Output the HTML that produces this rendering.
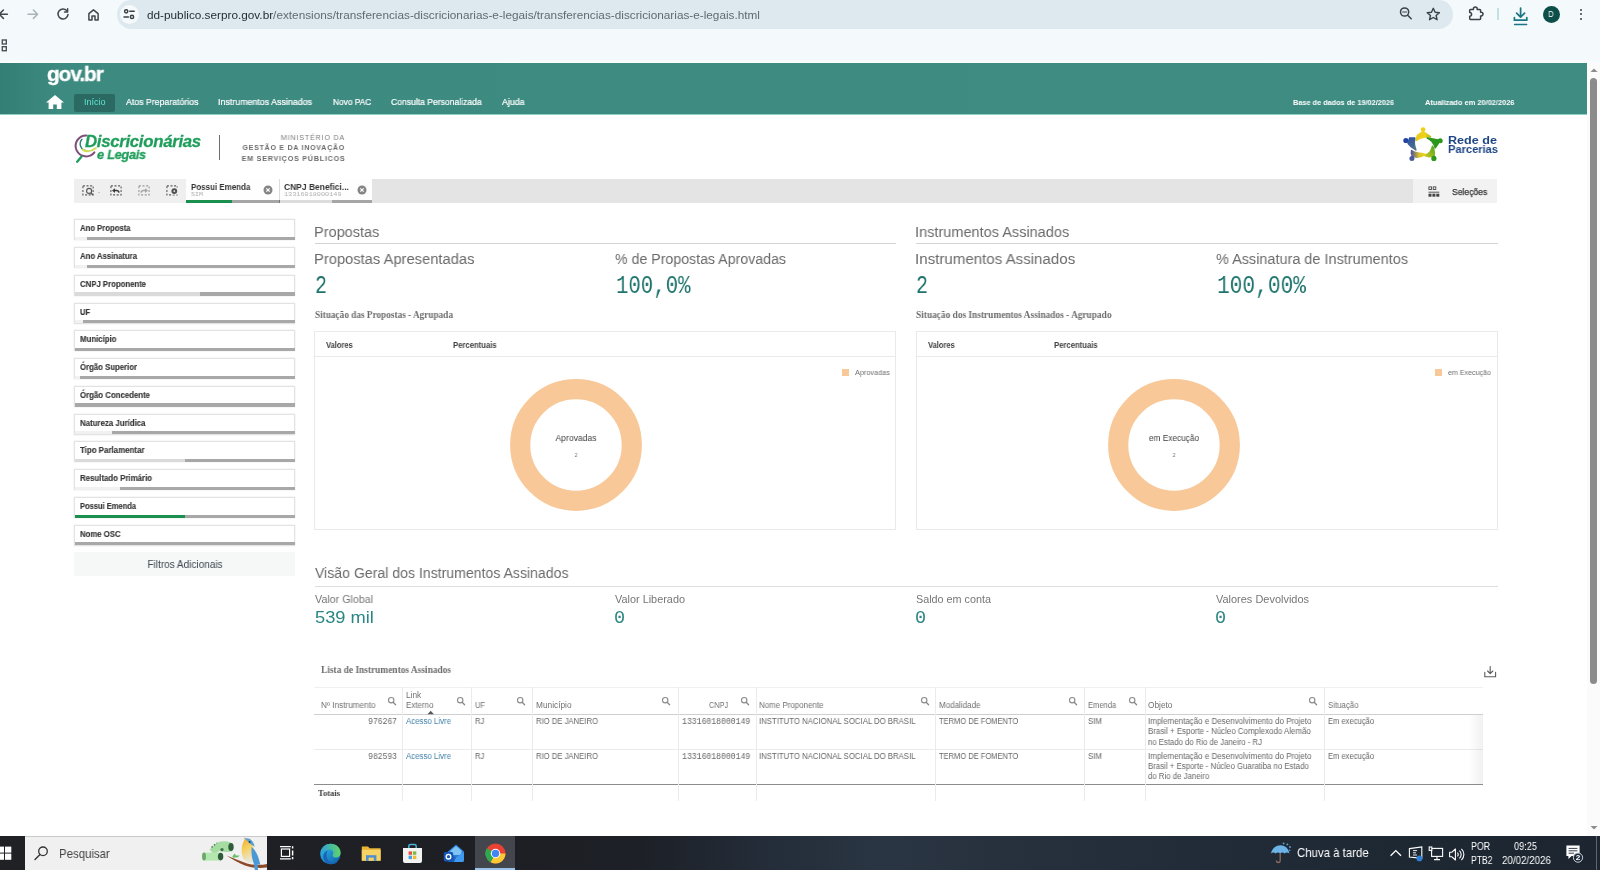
<!DOCTYPE html><html><head><meta charset="utf-8"><title>dd-publico</title><style>
html,body{margin:0;padding:0}body{width:1600px;height:870px;position:relative;overflow:hidden;background:#fff;font-family:"Liberation Sans",sans-serif}
.t{position:absolute;white-space:pre;line-height:1;display:inline-block;will-change:transform}
</style></head><body>
<div style="position:absolute;left:0px;top:0px;width:1600px;height:63px;background:#f4f9fc;"></div>
<div style="position:absolute;left:116.5px;top:0px;width:1336.5px;height:28.5px;background:#dde9ef;border-radius:14.25px;"></div>
<div style="position:absolute;left:119.5px;top:4.7px;width:19px;height:19px;background:#f6fafc;border-radius:50%;"></div>
<svg style="position:absolute;left:122px;top:7px;" width="14" height="14" viewBox="0 0 14 14"><g fill="none" stroke="#3a4247" stroke-width="1.5" stroke-linecap="round"><circle cx="4.2" cy="4.3" r="1.6"/><path d="M7.8 4.3H12.2"/><circle cx="10" cy="9.9" r="1.6"/><path d="M2 9.9H6.4"/></g></svg>
<svg style="position:absolute;left:0px;top:6px;" width="110" height="18" viewBox="0 0 110 18"><g fill="none" stroke="#40474c" stroke-width="1.5" stroke-linecap="round" stroke-linejoin="round"><path d="M7.4 8.2H-0.5M3.4 4L-0.8 8.2L3.4 12.4"/></g><g fill="none" stroke="#a9b4ba" stroke-width="1.5" stroke-linecap="round" stroke-linejoin="round"><path d="M28 8.2H37.3M33.4 4L37.6 8.2L33.4 12.4"/></g><g fill="none" stroke="#40474c" stroke-width="1.5" stroke-linecap="round" stroke-linejoin="round"><path d="M67.2 5.2A5 5 0 1 0 68 8.6"/><path d="M67.6 2.8V5.9H64.5" /></g><g fill="none" stroke="#40474c" stroke-width="1.5" stroke-linejoin="round"><path d="M88.9 14V7.6L93.5 3.8L98.1 7.6V14H95V10H92V14Z"/></g></svg>
<span class="t" style='top:10.00px;font-family:"Liberation Sans", sans-serif;font-size:11.4px;font-weight:400;color:#1f2a30;left:146.6px;transform-origin:0 0;transform:scaleX(1.0337);'>dd-publico.serpro.gov.br<span style="color:#5f6b72">/extensions/transferencias-discricionarias-e-legais/transferencias-discricionarias-e-legais.html</span></span>
<svg style="position:absolute;left:1396px;top:4px;" width="60" height="20" viewBox="0 0 60 20"><g fill="none" stroke="#3a4247" stroke-width="1.5" stroke-linecap="round" stroke-linejoin="round"><circle cx="8.6" cy="8" r="4.1"/><path d="M11.7 11.2L15.2 14.8"/><path d="M6.7 8H10.5" stroke-width="1.2"/><path d="M37.3 4.3L39.1 8.3L43.4 8.7L40.1 11.5L41.1 15.7L37.3 13.5L33.5 15.7L34.5 11.5L31.2 8.7L35.5 8.3Z" stroke-width="1.4"/></g></svg>
<svg style="position:absolute;left:1467px;top:5px;" width="18" height="18" viewBox="0 0 18 18"><path d="M2.7 5.3Q2.7 4.5 3.5 4.5H6.4V3.9A1.9 1.9 0 0 1 10.2 3.9V4.5H12.8Q13.6 4.5 13.6 5.3V7.3H14.2A1.8 1.8 0 0 1 14.2 10.9H13.6V13.6Q13.6 14.4 12.8 14.4H3.5Q2.7 14.4 2.7 13.6V11.3A1.9 1.9 0 0 0 2.7 7.5Z" fill="none" stroke="#3a4247" stroke-width="1.5" stroke-linejoin="round"/></svg>
<div style="position:absolute;left:1497.2px;top:8.2px;width:1.6px;height:12.2px;background:#c2e1e6;"></div>
<svg style="position:absolute;left:1511px;top:5px;" width="20" height="22" viewBox="0 0 20 22"><g fill="none" stroke="#1a7682" stroke-width="1.7" stroke-linecap="round" stroke-linejoin="round"><path d="M9.6 3V12M5.6 8.2L9.6 12.2L13.6 8.2"/><path d="M3.4 12.5V15.2H15.8V12.5"/><path d="M3.6 19.5H15.6" stroke-width="1.5"/></g></svg>
<div style="position:absolute;left:1542.7px;top:5.7px;width:17px;height:17px;background:#0b4f48;border-radius:50%;"></div>
<span class="t" style='top:9.00px;font-family:"Liberation Sans", sans-serif;font-size:9.4px;font-weight:400;color:#fff;left:1551.3px;transform-origin:0 0;margin-left:-500px;width:1000px;text-align:center;transform-origin:50% 0;transform:scaleX(0.7963);'>D</span>
<div style="position:absolute;left:1580.3px;top:8.8px;width:2px;height:2px;background:#3a4247;border-radius:50%;"></div>
<div style="position:absolute;left:1580.3px;top:13.3px;width:2px;height:2px;background:#3a4247;border-radius:50%;"></div>
<div style="position:absolute;left:1580.3px;top:17.8px;width:2px;height:2px;background:#3a4247;border-radius:50%;"></div>
<svg style="position:absolute;left:0px;top:38px;" width="10" height="16" viewBox="0 0 10 16"><g fill="none" stroke="#4a5256" stroke-width="1.4"><rect x="2.3" y="2" width="4" height="4"/><rect x="2.3" y="8.7" width="4" height="4"/></g></svg>
<div style="position:absolute;left:0px;top:59.5px;width:1600px;height:3.5px;background:linear-gradient(180deg,#f4f9fc,#fafdfe);"></div>
<div style="position:absolute;left:0px;top:63px;width:1587px;height:51px;background:linear-gradient(90deg,#347f75 0px,#3d8a80 60px,#3f8c82 100%);"></div>
<div style="position:absolute;left:0px;top:113.5px;width:1587px;height:1.5px;background:#8fd0c6;"></div>
<div style="position:absolute;left:1587px;top:63px;width:13px;height:773px;background:#fbfbfb;"></div>
<div style="position:absolute;left:1590.4px;top:78.3px;width:7px;height:605.7px;background:#8b8b8b;border-radius:3.5px;"></div>
<svg style="position:absolute;left:1588px;top:66px;" width="12" height="8" viewBox="0 0 12 8"><path d="M2.5 6L6 2.5L9.5 6Z" fill="#8b8b8b"/></svg>
<svg style="position:absolute;left:1588px;top:824px;" width="12" height="8" viewBox="0 0 12 8"><path d="M2.5 2L6 5.5L9.5 2Z" fill="#8b8b8b"/></svg>
<span class="t" style='top:63.00px;font-family:"Liberation Sans", sans-serif;font-size:21px;font-weight:700;color:#fff;left:47px;transform-origin:0 0;transform:scaleX(0.9854);letter-spacing:-1px;-webkit-text-stroke:0.35px #fff;'>gov.br</span>
<svg style="position:absolute;left:45px;top:94px;" width="20" height="16" viewBox="0 0 20 16"><path d="M10 1L1 8.6H3.6V15H8.2V10.4H11.8V15H16.4V8.6H19Z" fill="#fff"/></svg>
<div style="position:absolute;left:74.3px;top:93.8px;width:40.7px;height:18px;background:#2b6a63;border-radius:2px;"></div>
<span class="t" style='top:98.00px;font-family:"Liberation Sans", sans-serif;font-size:9px;font-weight:400;color:#5fe3d3;left:83.8px;transform-origin:0 0;transform:scaleX(0.9853);'>Início</span>
<span class="t" style='top:98.00px;font-family:"Liberation Sans", sans-serif;font-size:9px;font-weight:400;color:#fff;left:125.5px;transform-origin:0 0;transform:scaleX(0.9725);-webkit-text-stroke:0.2px #fff;'>Atos Preparatórios</span>
<span class="t" style='top:98.00px;font-family:"Liberation Sans", sans-serif;font-size:9px;font-weight:400;color:#fff;left:218px;transform-origin:0 0;transform:scaleX(0.9836);-webkit-text-stroke:0.2px #fff;'>Instrumentos Assinados</span>
<span class="t" style='top:98.00px;font-family:"Liberation Sans", sans-serif;font-size:9px;font-weight:400;color:#fff;left:332.5px;transform-origin:0 0;transform:scaleX(0.9260);-webkit-text-stroke:0.2px #fff;'>Novo PAC</span>
<span class="t" style='top:98.00px;font-family:"Liberation Sans", sans-serif;font-size:9px;font-weight:400;color:#fff;left:390.8px;transform-origin:0 0;transform:scaleX(0.9541);-webkit-text-stroke:0.2px #fff;'>Consulta Personalizada</span>
<span class="t" style='top:98.00px;font-family:"Liberation Sans", sans-serif;font-size:9px;font-weight:400;color:#fff;left:501.5px;transform-origin:0 0;transform:scaleX(0.9769);-webkit-text-stroke:0.2px #fff;'>Ajuda</span>
<span class="t" style='top:99.00px;font-family:"Liberation Sans", sans-serif;font-size:7.6px;font-weight:700;color:#fff;left:1293.3px;transform-origin:0 0;transform:scaleX(0.9648);'>Base de dados de 19/02/2026</span>
<span class="t" style='top:99.00px;font-family:"Liberation Sans", sans-serif;font-size:7.6px;font-weight:700;color:#fff;left:1425px;transform-origin:0 0;transform:scaleX(0.9771);'>Atualizado em 20/02/2026</span>
<svg style="position:absolute;left:70px;top:128px;" width="40" height="40" viewBox="0 0 40 40"><g fill="none" stroke-linecap="round"><path d="M16.4 7.4A10.5 10.5 0 1 0 24.4 24.4" stroke="#7d4f7c" stroke-width="2"/><path d="M12 11.2A6.8 6.8 0 0 0 16.8 22.6" stroke="#1f7d6c" stroke-width="1.3"/><path d="M12.4 21.6Q18.6 25.6 26 20" stroke="#d3dc58" stroke-width="1.9"/><path d="M11.6 28.6L7.2 33.8" stroke="#1e9e5a" stroke-width="2.3"/></g></svg>
<span class="t" style='top:134.00px;font-family:"Liberation Sans", sans-serif;font-size:16.8px;font-weight:700;color:#1e9e5a;font-style:italic;left:84.5px;transform-origin:0 0;letter-spacing:-0.3px;-webkit-text-stroke:0.3px #1e9e5a;'>Discricionárias</span>
<span class="t" style='top:148.00px;font-family:"Liberation Sans", sans-serif;font-size:13.2px;font-weight:700;color:#1e9e5a;font-style:italic;left:97.2px;transform-origin:0 0;transform:scaleX(0.9684);letter-spacing:-0.3px;-webkit-text-stroke:0.3px #1e9e5a;'>e Legais</span>
<div style="position:absolute;left:218.8px;top:135px;width:1.1px;height:24.5px;background:#6f6f6f;"></div>
<span class="t" style='top:134.00px;font-family:"Liberation Sans", sans-serif;font-size:7.4px;font-weight:400;color:#7a7a7a;right:1255px;transform-origin:100% 0;transform:scaleX(0.9577);letter-spacing:0.9px;'>MINISTÉRIO DA</span>
<span class="t" style='top:144.00px;font-family:"Liberation Sans", sans-serif;font-size:7.4px;font-weight:700;color:#6a6a6a;right:1255px;transform-origin:100% 0;transform:scaleX(0.9492);letter-spacing:0.8px;'>GESTÃO E DA INOVAÇÃO</span>
<span class="t" style='top:155.00px;font-family:"Liberation Sans", sans-serif;font-size:7.4px;font-weight:700;color:#6a6a6a;right:1255px;transform-origin:100% 0;transform:scaleX(0.9660);letter-spacing:0.8px;'>EM SERVIÇOS PÚBLICOS</span>
<svg style="position:absolute;left:1395px;top:122px;" width="60" height="44" viewBox="0 0 60 44"><defs>
<linearGradient id="r1" x1="0" y1="0" x2="1" y2="0"><stop offset="0" stop-color="#e8c818"/><stop offset="0.6" stop-color="#f0d21a"/><stop offset="1" stop-color="#b4b61e"/></linearGradient>
<linearGradient id="r3" x1="1" y1="0" x2="0" y2="1"><stop offset="0" stop-color="#4fa41e"/><stop offset="1" stop-color="#cfca1e"/></linearGradient>
<linearGradient id="r4" x1="0" y1="0" x2="1" y2="0"><stop offset="0" stop-color="#55559a"/><stop offset="0.55" stop-color="#d8c428"/><stop offset="1" stop-color="#ecd41c"/></linearGradient>
<linearGradient id="r5" x1="0" y1="0" x2="0.6" y2="1"><stop offset="0" stop-color="#2c50aa"/><stop offset="1" stop-color="#4f6f86"/></linearGradient></defs>
<path d="M28.1 9.6L35.6 14.9C33 14.6 30 14.9 27.5 15.6C25 16.3 22.8 17.2 21 18.6L22.4 13.4Z" fill="url(#r1)" stroke="url(#r1)" stroke-width="1.5" stroke-linejoin="round"/>
<path d="M32.2 16L44.6 18.2L43.2 21.6L40.2 25.9C39.6 23.4 38.4 21 36.8 19.2C35.4 17.8 34 16.8 32.2 16Z" fill="#2b981c" stroke="#2b981c" stroke-width="1.5" stroke-linejoin="round"/>
<path d="M37.5 24.2C38.8 26 39.4 29 39.2 33.9L34.2 34.8L29.6 33.6C32 32.8 34 31.4 35.4 29.4C36.4 27.8 37.2 26 37.5 24.2Z" fill="url(#r3)" stroke="url(#r3)" stroke-width="1.5" stroke-linejoin="round"/>
<path d="M16.6 28.6C18.4 29.8 20.4 30.6 23 31C25.6 31.4 28 31.6 30.4 32.4L27 34.2L22 35.2L17.4 34.2L16.4 31.2Z" fill="url(#r4)" stroke="url(#r4)" stroke-width="1.5" stroke-linejoin="round"/>
<path d="M14.6 16.1L19.8 16.1C19.2 18 19.1 20.2 19.4 22.4C19.7 24.4 20.2 26.2 20.9 27.9L16 24.6L13.1 21.6Z" fill="url(#r5)" stroke="url(#r5)" stroke-width="1.5" stroke-linejoin="round"/>
<circle cx="28.1" cy="7.6" r="2.3" fill="#f0cf14"/><circle cx="45.2" cy="18.7" r="2.5" fill="#2b981c"/><circle cx="38.9" cy="36.4" r="2.6" fill="#2e951e"/><circle cx="16.9" cy="36.4" r="2.5" fill="#4a5a9c"/><circle cx="10.9" cy="18.5" r="2.6" fill="#2342a4"/></svg>
<span class="t" style='top:134.00px;font-family:"Liberation Sans", sans-serif;font-size:11.6px;font-weight:700;color:#1d4584;left:1448px;transform-origin:0 0;transform:scaleX(1.0862);'>Rede de</span>
<span class="t" style='top:143.00px;font-family:"Liberation Sans", sans-serif;font-size:11.6px;font-weight:700;color:#1d4584;left:1448px;transform-origin:0 0;transform:scaleX(0.9575);'>Parcerias</span>
<div style="position:absolute;left:74.3px;top:179.3px;width:1423px;height:24px;background:#e4e4e4;"></div>
<div style="position:absolute;left:74.3px;top:179.3px;width:111.4px;height:24px;background:#efefef;"></div>
<svg style="position:absolute;left:82.2px;top:185.4px;" width="20" height="12" viewBox="0 0 20 12"><rect x="0.9" y="0.9" width="10.2" height="9" fill="none" stroke="#5c5c5c" stroke-width="1.1" stroke-dasharray="2 1.6"/><circle cx="7.1" cy="5.9" r="2.5" fill="#efefef" stroke="#555" stroke-width="1.1"/><path d="M8.9 7.8L10.9 10" stroke="#555" stroke-width="1.4"/><path d="M16.2 7.6H18" stroke="#bbb" stroke-width="0.9"/></svg>
<svg style="position:absolute;left:110px;top:185.4px;" width="20" height="12" viewBox="0 0 20 12"><rect x="0.9" y="0.9" width="10.2" height="9" fill="none" stroke="#5c5c5c" stroke-width="1.1" stroke-dasharray="2 1.6"/><path d="M3.6 5.6H6.4C8 5.6 8.8 6.4 9 7.6" fill="none" stroke="#3a3a3a" stroke-width="1.5"/><path d="M5 3.2L2 5.6L5 8Z" fill="#3a3a3a"/></svg>
<svg style="position:absolute;left:138px;top:185.4px;" width="20" height="12" viewBox="0 0 20 12"><rect x="0.9" y="0.9" width="10.2" height="9" fill="none" stroke="#9a9a9a" stroke-width="1.1" stroke-dasharray="2 1.6"/><path d="M8.4 5.6H5.6C4 5.6 3.2 6.4 3 7.6" fill="none" stroke="#a5a5a5" stroke-width="1.5"/><path d="M7 3.2L10 5.6L7 8Z" fill="#a5a5a5"/></svg>
<svg style="position:absolute;left:165.8px;top:185.4px;" width="20" height="12" viewBox="0 0 20 12"><rect x="0.9" y="0.9" width="10.2" height="9" fill="none" stroke="#5c5c5c" stroke-width="1.1" stroke-dasharray="2 1.6"/><rect x="5" y="2.6" width="7" height="7" fill="#efefef"/><circle cx="8.3" cy="6.1" r="2.9" fill="#505050"/><circle cx="8.3" cy="6.1" r="0.9" fill="#efefef"/></svg>
<div style="position:absolute;left:185.6px;top:179px;width:93.2px;height:24.2px;background:#fefefe;"></div>
<span class="t" style='top:183.00px;font-family:"Liberation Sans", sans-serif;font-size:8.9px;font-weight:700;color:#333;left:191px;transform-origin:0 0;transform:scaleX(0.8972);'>Possui Emenda</span>
<span class="t" style='top:192.00px;font-family:"Liberation Mono", monospace;font-size:6.2px;font-weight:400;color:#b0b0b0;left:191px;transform-origin:0 0;transform:scaleX(1.0771);'>SIM</span>
<div style="position:absolute;left:185.8px;top:200.4px;width:93.5px;height:2.9px;background:#a6a6a6;"></div>
<div style="position:absolute;left:185.8px;top:200.4px;width:46.2px;height:2.9px;background:#1b8f4d;"></div>
<div style="position:absolute;left:278.8px;top:179.3px;width:1.2px;height:24px;background:#dcdcdc;"></div>
<div style="position:absolute;left:279.2px;top:200.4px;width:0.9px;height:2.9px;background:#777;"></div>
<div style="position:absolute;left:280px;top:179px;width:91.9px;height:24.2px;background:#fefefe;"></div>
<span class="t" style='top:183.00px;font-family:"Liberation Sans", sans-serif;font-size:8.9px;font-weight:700;color:#333;left:284.4px;transform-origin:0 0;transform:scaleX(0.9521);'>CNPJ Benefici...</span>
<span class="t" style='top:192.00px;font-family:"Liberation Mono", monospace;font-size:6.2px;font-weight:400;color:#b0b0b0;left:284.4px;transform-origin:0 0;transform:scaleX(1.1061);'>13316018000149</span>
<div style="position:absolute;left:280.1px;top:200.4px;width:91.7px;height:2.9px;background:#a6a6a6;"></div>
<div style="position:absolute;left:280.1px;top:200.4px;width:52.4px;height:2.9px;background:#dcdcdc;"></div>
<svg style="position:absolute;left:263.2px;top:184.6px;" width="10" height="10" viewBox="0 0 10 10"><circle cx="5" cy="5" r="4.5" fill="#858585"/><path d="M3.3 3.3L6.7 6.7M6.7 3.3L3.3 6.7" stroke="#fff" stroke-width="1.2"/></svg>
<svg style="position:absolute;left:356.8px;top:184.6px;" width="10" height="10" viewBox="0 0 10 10"><circle cx="5" cy="5" r="4.5" fill="#858585"/><path d="M3.3 3.3L6.7 6.7M6.7 3.3L3.3 6.7" stroke="#fff" stroke-width="1.2"/></svg>
<div style="position:absolute;left:1413.4px;top:179.3px;width:84px;height:24px;background:#f2f2f2;"></div>
<svg style="position:absolute;left:1427.5px;top:186px;" width="12" height="12" viewBox="0 0 12 12"><g fill="none" stroke="#444" stroke-width="0.9"><rect x="0.9" y="0.9" width="2.6" height="2.6"/><rect x="5.2" y="0.9" width="2.6" height="2.6"/></g><path d="M0.5 6.2H11.3" stroke="#444" stroke-width="0.9"/><g fill="#444"><rect x="0.5" y="7.7" width="3" height="3"/><rect x="4.4" y="7.7" width="3" height="3"/><rect x="8.3" y="7.7" width="3" height="3"/></g></svg>
<span class="t" style='top:188.00px;font-family:"Liberation Sans", sans-serif;font-size:9.2px;font-weight:400;color:#333;left:1452.3px;transform-origin:0 0;transform:scaleX(0.9313);-webkit-text-stroke:0.25px #333;'>Seleções</span>
<div style="position:absolute;left:74.3px;top:219.4px;width:221px;height:21px;background:#fff;box-sizing:border-box;border:1px solid #e3e3e3;box-shadow:0 0 1.5px rgba(0,0,0,0.12);"></div>
<div style="position:absolute;left:74.8px;top:236.9px;width:220px;height:3.1px;background:#a8a8a8;"></div>
<div style="position:absolute;left:74.8px;top:236.9px;width:12px;height:3.1px;background:#f1f1f1;"></div>
<span class="t" style='top:224.00px;font-family:"Liberation Sans", sans-serif;font-size:8.6px;font-weight:700;color:#383838;left:79.8px;transform-origin:0 0;transform:scaleX(0.8963);-webkit-text-stroke:0.15px #383838;'>Ano Proposta</span>
<div style="position:absolute;left:74.3px;top:247.16px;width:221px;height:21px;background:#fff;box-sizing:border-box;border:1px solid #e3e3e3;box-shadow:0 0 1.5px rgba(0,0,0,0.12);"></div>
<div style="position:absolute;left:74.8px;top:264.65999999999997px;width:220px;height:3.1px;background:#a8a8a8;"></div>
<div style="position:absolute;left:74.8px;top:264.65999999999997px;width:12px;height:3.1px;background:#f1f1f1;"></div>
<span class="t" style='top:252.00px;font-family:"Liberation Sans", sans-serif;font-size:8.6px;font-weight:700;color:#383838;left:79.8px;transform-origin:0 0;transform:scaleX(0.9019);-webkit-text-stroke:0.15px #383838;'>Ano Assinatura</span>
<div style="position:absolute;left:74.3px;top:274.92px;width:221px;height:21px;background:#fff;box-sizing:border-box;border:1px solid #e3e3e3;box-shadow:0 0 1.5px rgba(0,0,0,0.12);"></div>
<div style="position:absolute;left:74.8px;top:292.42px;width:220px;height:3.1px;background:#a8a8a8;"></div>
<div style="position:absolute;left:74.8px;top:292.42px;width:125.5px;height:3.1px;background:#dadada;"></div>
<span class="t" style='top:280.00px;font-family:"Liberation Sans", sans-serif;font-size:8.6px;font-weight:700;color:#383838;left:79.8px;transform-origin:0 0;transform:scaleX(0.9033);-webkit-text-stroke:0.15px #383838;'>CNPJ Proponente</span>
<div style="position:absolute;left:74.3px;top:302.68px;width:221px;height:21px;background:#fff;box-sizing:border-box;border:1px solid #e3e3e3;box-shadow:0 0 1.5px rgba(0,0,0,0.12);"></div>
<div style="position:absolute;left:74.8px;top:320.18px;width:220px;height:3.1px;background:#a8a8a8;"></div>
<div style="position:absolute;left:74.8px;top:320.18px;width:8px;height:3.1px;background:#f1f1f1;"></div>
<span class="t" style='top:308.00px;font-family:"Liberation Sans", sans-serif;font-size:8.6px;font-weight:700;color:#383838;left:79.8px;transform-origin:0 0;transform:scaleX(0.8719);-webkit-text-stroke:0.15px #383838;'>UF</span>
<div style="position:absolute;left:74.3px;top:330.44px;width:221px;height:21px;background:#fff;box-sizing:border-box;border:1px solid #e3e3e3;box-shadow:0 0 1.5px rgba(0,0,0,0.12);"></div>
<div style="position:absolute;left:74.8px;top:347.94px;width:220px;height:3.1px;background:#a8a8a8;"></div>
<span class="t" style='top:335.00px;font-family:"Liberation Sans", sans-serif;font-size:8.6px;font-weight:700;color:#383838;left:79.8px;transform-origin:0 0;transform:scaleX(0.9100);-webkit-text-stroke:0.15px #383838;'>Município</span>
<div style="position:absolute;left:74.3px;top:358.20000000000005px;width:221px;height:21px;background:#fff;box-sizing:border-box;border:1px solid #e3e3e3;box-shadow:0 0 1.5px rgba(0,0,0,0.12);"></div>
<div style="position:absolute;left:74.8px;top:375.70000000000005px;width:220px;height:3.1px;background:#a8a8a8;"></div>
<div style="position:absolute;left:74.8px;top:375.70000000000005px;width:5px;height:3.1px;background:#f1f1f1;"></div>
<span class="t" style='top:363.00px;font-family:"Liberation Sans", sans-serif;font-size:8.6px;font-weight:700;color:#383838;left:79.8px;transform-origin:0 0;transform:scaleX(0.9043);-webkit-text-stroke:0.15px #383838;'>Órgão Superior</span>
<div style="position:absolute;left:74.3px;top:385.96000000000004px;width:221px;height:21px;background:#fff;box-sizing:border-box;border:1px solid #e3e3e3;box-shadow:0 0 1.5px rgba(0,0,0,0.12);"></div>
<div style="position:absolute;left:74.8px;top:403.46000000000004px;width:220px;height:3.1px;background:#a8a8a8;"></div>
<span class="t" style='top:391.00px;font-family:"Liberation Sans", sans-serif;font-size:8.6px;font-weight:700;color:#383838;left:79.8px;transform-origin:0 0;transform:scaleX(0.9104);-webkit-text-stroke:0.15px #383838;'>Órgão Concedente</span>
<div style="position:absolute;left:74.3px;top:413.72px;width:221px;height:21px;background:#fff;box-sizing:border-box;border:1px solid #e3e3e3;box-shadow:0 0 1.5px rgba(0,0,0,0.12);"></div>
<div style="position:absolute;left:74.8px;top:431.22px;width:220px;height:3.1px;background:#a8a8a8;"></div>
<div style="position:absolute;left:74.8px;top:431.22px;width:37px;height:3.1px;background:#f1f1f1;"></div>
<span class="t" style='top:419.00px;font-family:"Liberation Sans", sans-serif;font-size:8.6px;font-weight:700;color:#383838;left:79.8px;transform-origin:0 0;transform:scaleX(0.9141);-webkit-text-stroke:0.15px #383838;'>Natureza Jurídica</span>
<div style="position:absolute;left:74.3px;top:441.48px;width:221px;height:21px;background:#fff;box-sizing:border-box;border:1px solid #e3e3e3;box-shadow:0 0 1.5px rgba(0,0,0,0.12);"></div>
<div style="position:absolute;left:74.8px;top:458.98px;width:220px;height:3.1px;background:#a8a8a8;"></div>
<div style="position:absolute;left:74.8px;top:458.98px;width:110px;height:3.1px;background:#dadada;"></div>
<span class="t" style='top:446.00px;font-family:"Liberation Sans", sans-serif;font-size:8.6px;font-weight:700;color:#383838;left:79.8px;transform-origin:0 0;transform:scaleX(0.9208);-webkit-text-stroke:0.15px #383838;'>Tipo Parlamentar</span>
<div style="position:absolute;left:74.3px;top:469.24px;width:221px;height:21px;background:#fff;box-sizing:border-box;border:1px solid #e3e3e3;box-shadow:0 0 1.5px rgba(0,0,0,0.12);"></div>
<div style="position:absolute;left:74.8px;top:486.74px;width:220px;height:3.1px;background:#a8a8a8;"></div>
<div style="position:absolute;left:74.8px;top:486.74px;width:45px;height:3.1px;background:#f1f1f1;"></div>
<span class="t" style='top:474.00px;font-family:"Liberation Sans", sans-serif;font-size:8.6px;font-weight:700;color:#383838;left:79.8px;transform-origin:0 0;transform:scaleX(0.9137);-webkit-text-stroke:0.15px #383838;'>Resultado Primário</span>
<div style="position:absolute;left:74.3px;top:497.0px;width:221px;height:21px;background:#fff;box-sizing:border-box;border:1px solid #e3e3e3;box-shadow:0 0 1.5px rgba(0,0,0,0.12);"></div>
<div style="position:absolute;left:74.8px;top:514.5px;width:220px;height:3.1px;background:#a8a8a8;"></div>
<div style="position:absolute;left:74.8px;top:514.5px;width:110px;height:3.1px;background:#1b8f4d;"></div>
<span class="t" style='top:502.00px;font-family:"Liberation Sans", sans-serif;font-size:8.6px;font-weight:700;color:#383838;left:79.8px;transform-origin:0 0;transform:scaleX(0.8750);-webkit-text-stroke:0.15px #383838;'>Possui Emenda</span>
<div style="position:absolute;left:74.3px;top:524.76px;width:221px;height:21px;background:#fff;box-sizing:border-box;border:1px solid #e3e3e3;box-shadow:0 0 1.5px rgba(0,0,0,0.12);"></div>
<div style="position:absolute;left:74.8px;top:542.26px;width:220px;height:3.1px;background:#a8a8a8;"></div>
<span class="t" style='top:530.00px;font-family:"Liberation Sans", sans-serif;font-size:8.6px;font-weight:700;color:#383838;left:79.8px;transform-origin:0 0;transform:scaleX(0.9022);-webkit-text-stroke:0.15px #383838;'>Nome OSC</span>
<div style="position:absolute;left:74.3px;top:552.4px;width:221px;height:23.8px;background:#f6f7f7;"></div>
<span class="t" style='top:559.00px;font-family:"Liberation Sans", sans-serif;font-size:10.8px;font-weight:400;color:#3d4852;left:184.6px;transform-origin:0 0;margin-left:-500px;width:1000px;text-align:center;transform-origin:50% 0;transform:scaleX(0.9282);'>Filtros Adicionais</span>
<span class="t" style='top:224.00px;font-family:"Liberation Sans", sans-serif;font-size:15.2px;font-weight:400;color:#6b6b6b;left:313.9px;transform-origin:0 0;transform:scaleX(0.9563);'>Propostas</span>
<div style="position:absolute;left:314.5px;top:242.7px;width:581.5px;height:1px;background:#d4d4d4;"></div>
<span class="t" style='top:224.00px;font-family:"Liberation Sans", sans-serif;font-size:15.2px;font-weight:400;color:#6b6b6b;left:914.7px;transform-origin:0 0;transform:scaleX(0.9563);'>Instrumentos Assinados</span>
<div style="position:absolute;left:916px;top:242.7px;width:581.5px;height:1px;background:#d4d4d4;"></div>
<span class="t" style='top:251.00px;font-family:"Liberation Sans", sans-serif;font-size:15.2px;font-weight:400;color:#6b6b6b;left:313.9px;transform-origin:0 0;transform:scaleX(0.9693);'>Propostas Apresentadas</span>
<span class="t" style='top:251.00px;font-family:"Liberation Sans", sans-serif;font-size:15.2px;font-weight:400;color:#6b6b6b;left:614.6px;transform-origin:0 0;transform:scaleX(0.9333);'>% de Propostas Aprovadas</span>
<span class="t" style='top:251.00px;font-family:"Liberation Sans", sans-serif;font-size:15.2px;font-weight:400;color:#6b6b6b;left:914.7px;transform-origin:0 0;transform:scaleX(0.9935);'>Instrumentos Assinados</span>
<span class="t" style='top:251.00px;font-family:"Liberation Sans", sans-serif;font-size:15.2px;font-weight:400;color:#6b6b6b;left:1216.2px;transform-origin:0 0;transform:scaleX(0.9516);'>% Assinatura de Instrumentos</span>
<span class="t" style='top:274.00px;font-family:"Liberation Mono", monospace;font-size:25.5px;font-weight:400;color:#1e746d;left:314.9px;transform-origin:0 0;transform:scaleX(0.7837);'>2</span>
<span class="t" style='top:274.00px;font-family:"Liberation Mono", monospace;font-size:25.5px;font-weight:400;color:#1e746d;left:615.8px;transform-origin:0 0;transform:scaleX(0.8113);'>100,0%</span>
<span class="t" style='top:274.00px;font-family:"Liberation Mono", monospace;font-size:25.5px;font-weight:400;color:#1e746d;left:915.8px;transform-origin:0 0;transform:scaleX(0.7837);'>2</span>
<span class="t" style='top:274.00px;font-family:"Liberation Mono", monospace;font-size:25.5px;font-weight:400;color:#1e746d;left:1217px;transform-origin:0 0;transform:scaleX(0.8308);'>100,00%</span>
<span class="t" style='top:310.00px;font-family:"Liberation Serif", serif;font-size:9.6px;font-weight:700;color:#6e6e6e;left:314.8px;transform-origin:0 0;transform:scaleX(0.9635);'>Situação das Propostas - Agrupada</span>
<span class="t" style='top:310.00px;font-family:"Liberation Serif", serif;font-size:9.6px;font-weight:700;color:#6e6e6e;left:915.8px;transform-origin:0 0;transform:scaleX(0.9740);'>Situação dos Instrumentos Assinados - Agrupado</span>
<div style="position:absolute;left:314.4px;top:331.4px;width:581.5px;height:198.6px;background:#fff;box-sizing:border-box;border:1px solid #e9e9e9;"></div>
<div style="position:absolute;left:314.4px;top:355.8px;width:581.5px;height:1px;background:#e9e9e9;"></div>
<span class="t" style='top:342.00px;font-family:"Liberation Sans", sans-serif;font-size:8.2px;font-weight:700;color:#404040;left:326.4px;transform-origin:0 0;transform:scaleX(0.9197);'>Valores</span>
<span class="t" style='top:342.00px;font-family:"Liberation Sans", sans-serif;font-size:8.2px;font-weight:700;color:#404040;left:452.59999999999997px;transform-origin:0 0;transform:scaleX(0.9414);'>Percentuais</span>
<svg style="position:absolute;left:505.85px;top:374.9px;" width="140" height="140" viewBox="0 0 140 140"><circle cx="70" cy="70" r="55.8" fill="none" stroke="#f8c898" stroke-width="20.2"/></svg>
<span class="t" style='top:433.00px;font-family:"Liberation Sans", sans-serif;font-size:9.4px;font-weight:400;color:#404040;left:575.85px;transform-origin:0 0;margin-left:-500px;width:1000px;text-align:center;transform-origin:50% 0;transform:scaleX(0.9146);'>Aprovadas</span>
<span class="t" style='top:453.00px;font-family:"Liberation Mono", monospace;font-size:6px;font-weight:400;color:#777;left:575.85px;transform-origin:0 0;margin-left:-500px;width:1000px;text-align:center;transform-origin:50% 0;transform:scaleX(0.8312);'>2</span>
<div style="position:absolute;left:841.6px;top:369px;width:7px;height:7px;background:#f8c898;"></div>
<span class="t" style='top:369.00px;font-family:"Liberation Sans", sans-serif;font-size:7.4px;font-weight:400;color:#6e6e6e;left:854.6px;transform-origin:0 0;transform:scaleX(0.9846);'>Aprovadas</span>
<div style="position:absolute;left:916.2px;top:331.4px;width:581.5px;height:198.6px;background:#fff;box-sizing:border-box;border:1px solid #e9e9e9;"></div>
<div style="position:absolute;left:916.2px;top:355.8px;width:581.5px;height:1px;background:#e9e9e9;"></div>
<span class="t" style='top:342.00px;font-family:"Liberation Sans", sans-serif;font-size:8.2px;font-weight:700;color:#404040;left:928.2px;transform-origin:0 0;transform:scaleX(0.9197);'>Valores</span>
<span class="t" style='top:342.00px;font-family:"Liberation Sans", sans-serif;font-size:8.2px;font-weight:700;color:#404040;left:1054.4px;transform-origin:0 0;transform:scaleX(0.9414);'>Percentuais</span>
<svg style="position:absolute;left:1103.75px;top:374.9px;" width="140" height="140" viewBox="0 0 140 140"><circle cx="70" cy="70" r="55.8" fill="none" stroke="#f8c898" stroke-width="20.2"/></svg>
<span class="t" style='top:433.00px;font-family:"Liberation Sans", sans-serif;font-size:9.4px;font-weight:400;color:#404040;left:1173.75px;transform-origin:0 0;margin-left:-500px;width:1000px;text-align:center;transform-origin:50% 0;transform:scaleX(0.8801);'>em Execução</span>
<span class="t" style='top:453.00px;font-family:"Liberation Mono", monospace;font-size:6px;font-weight:400;color:#777;left:1173.75px;transform-origin:0 0;margin-left:-500px;width:1000px;text-align:center;transform-origin:50% 0;transform:scaleX(0.8312);'>2</span>
<div style="position:absolute;left:1435px;top:369px;width:7px;height:7px;background:#f8c898;"></div>
<span class="t" style='top:369.00px;font-family:"Liberation Sans", sans-serif;font-size:7.4px;font-weight:400;color:#6e6e6e;left:1448px;transform-origin:0 0;transform:scaleX(0.9602);'>em Execução</span>
<span class="t" style='top:565.00px;font-family:"Liberation Sans", sans-serif;font-size:15.2px;font-weight:400;color:#6b6b6b;left:314.6px;transform-origin:0 0;transform:scaleX(0.9277);'>Visão Geral dos Instrumentos Assinados</span>
<div style="position:absolute;left:314.5px;top:585.8px;width:1183px;height:1px;background:#dedede;"></div>
<span class="t" style='top:594.00px;font-family:"Liberation Sans", sans-serif;font-size:10.8px;font-weight:400;color:#767676;left:314.6px;transform-origin:0 0;transform:scaleX(0.9893);'>Valor Global</span>
<span class="t" style='top:610.00px;font-family:"Liberation Sans", sans-serif;font-size:16.6px;font-weight:400;color:#2a8583;left:314.8px;transform-origin:0 0;transform:scaleX(1.1009);'>539 mil</span>
<span class="t" style='top:594.00px;font-family:"Liberation Sans", sans-serif;font-size:10.8px;font-weight:400;color:#767676;left:615px;transform-origin:0 0;transform:scaleX(1.0081);'>Valor Liberado</span>
<span class="t" style='top:610.00px;font-family:"Liberation Mono", monospace;font-size:18.5px;font-weight:400;color:#2a8583;left:613.9px;transform-origin:0 0;transform:scaleX(0.9722);'>0</span>
<span class="t" style='top:594.00px;font-family:"Liberation Sans", sans-serif;font-size:10.8px;font-weight:400;color:#767676;left:915.6px;transform-origin:0 0;'>Saldo em conta</span>
<span class="t" style='top:610.00px;font-family:"Liberation Mono", monospace;font-size:18.5px;font-weight:400;color:#2a8583;left:914.5px;transform-origin:0 0;transform:scaleX(0.9722);'>0</span>
<span class="t" style='top:594.00px;font-family:"Liberation Sans", sans-serif;font-size:10.8px;font-weight:400;color:#767676;left:1216px;transform-origin:0 0;transform:scaleX(1.0150);'>Valores Devolvidos</span>
<span class="t" style='top:610.00px;font-family:"Liberation Mono", monospace;font-size:18.5px;font-weight:400;color:#2a8583;left:1214.9px;transform-origin:0 0;transform:scaleX(0.9722);'>0</span>
<span class="t" style='top:665.00px;font-family:"Liberation Serif", serif;font-size:10px;font-weight:700;color:#6e6e6e;left:320.5px;transform-origin:0 0;transform:scaleX(0.9376);'>Lista de Instrumentos Assinados</span>
<svg style="position:absolute;left:1483px;top:665px;" width="15" height="14" viewBox="0 0 15 14"><g fill="none" stroke="#595959" stroke-width="1.1" stroke-linecap="round" stroke-linejoin="round"><path d="M7.2 1.5V8.4M4.6 6L7.2 8.6L9.8 6"/><path d="M1.8 7.4V11.8H12.6V7.4"/></g></svg>
<div style="position:absolute;left:314.4px;top:687.4px;width:1168.4px;height:1px;background:#f0f0f0;"></div>
<div style="position:absolute;left:314.4px;top:713.6px;width:1168.4px;height:1.2px;background:#cfcfcf;"></div>
<div style="position:absolute;left:314.4px;top:749.3px;width:1168.4px;height:1px;background:#ececec;"></div>
<div style="position:absolute;left:314.4px;top:783.9px;width:1168.4px;height:1.1px;background:#8c8c8c;"></div>
<div style="position:absolute;left:402.0px;top:687.4px;width:1px;height:114px;background:#ebebeb;"></div>
<div style="position:absolute;left:471.0px;top:687.4px;width:1px;height:114px;background:#ebebeb;"></div>
<div style="position:absolute;left:532.0px;top:687.4px;width:1px;height:114px;background:#ebebeb;"></div>
<div style="position:absolute;left:677.5px;top:687.4px;width:1px;height:114px;background:#ebebeb;"></div>
<div style="position:absolute;left:755.7px;top:687.4px;width:1px;height:114px;background:#ebebeb;"></div>
<div style="position:absolute;left:934.9px;top:687.4px;width:1px;height:114px;background:#ebebeb;"></div>
<div style="position:absolute;left:1083.9px;top:687.4px;width:1px;height:114px;background:#ebebeb;"></div>
<div style="position:absolute;left:1144.7px;top:687.4px;width:1px;height:114px;background:#ebebeb;"></div>
<div style="position:absolute;left:1323.7px;top:687.4px;width:1px;height:114px;background:#ebebeb;"></div>
<div style="position:absolute;left:1468px;top:715px;width:14.8px;height:69px;background:linear-gradient(90deg,rgba(0,0,0,0),rgba(0,0,0,0.055));"></div>
<span class="t" style='top:701.00px;font-family:"Liberation Sans", sans-serif;font-size:8.3px;font-weight:400;color:#707070;left:320.5px;transform-origin:0 0;transform:scaleX(0.9884);'>Nº Instrumento</span>
<span class="t" style='top:691.00px;font-family:"Liberation Sans", sans-serif;font-size:8.3px;font-weight:400;color:#707070;left:406.3px;transform-origin:0 0;transform:scaleX(0.9846);'>Link</span>
<span class="t" style='top:701.00px;font-family:"Liberation Sans", sans-serif;font-size:8.3px;font-weight:400;color:#707070;left:406.3px;transform-origin:0 0;transform:scaleX(0.9617);'>Externo</span>
<span class="t" style='top:701.00px;font-family:"Liberation Sans", sans-serif;font-size:8.3px;font-weight:400;color:#707070;left:474.8px;transform-origin:0 0;transform:scaleX(0.9040);'>UF</span>
<span class="t" style='top:701.00px;font-family:"Liberation Sans", sans-serif;font-size:8.3px;font-weight:400;color:#707070;left:535.6px;transform-origin:0 0;'>Município</span>
<span class="t" style='top:701.00px;font-family:"Liberation Sans", sans-serif;font-size:8.3px;font-weight:400;color:#707070;left:708.8px;transform-origin:0 0;transform:scaleX(0.8859);'>CNPJ</span>
<span class="t" style='top:701.00px;font-family:"Liberation Sans", sans-serif;font-size:8.3px;font-weight:400;color:#707070;left:759.3px;transform-origin:0 0;transform:scaleX(0.9578);'>Nome Proponente</span>
<span class="t" style='top:701.00px;font-family:"Liberation Sans", sans-serif;font-size:8.3px;font-weight:400;color:#707070;left:939px;transform-origin:0 0;transform:scaleX(0.9672);'>Modalidade</span>
<span class="t" style='top:701.00px;font-family:"Liberation Sans", sans-serif;font-size:8.3px;font-weight:400;color:#707070;left:1087.5px;transform-origin:0 0;transform:scaleX(0.9124);'>Emenda</span>
<span class="t" style='top:701.00px;font-family:"Liberation Sans", sans-serif;font-size:8.3px;font-weight:400;color:#707070;left:1148px;transform-origin:0 0;transform:scaleX(0.9815);'>Objeto</span>
<span class="t" style='top:701.00px;font-family:"Liberation Sans", sans-serif;font-size:8.3px;font-weight:400;color:#707070;left:1328px;transform-origin:0 0;transform:scaleX(0.9444);'>Situação</span>
<svg style="position:absolute;left:386.8px;top:696px;" width="10" height="10" viewBox="0 0 10 10"><circle cx="4.2" cy="4.2" r="2.7" fill="none" stroke="#8a8a8a" stroke-width="1.1"/><path d="M6.2 6.3L8.6 8.8" stroke="#8a8a8a" stroke-width="1.3" stroke-linecap="round"/></svg>
<svg style="position:absolute;left:455.8px;top:696px;" width="10" height="10" viewBox="0 0 10 10"><circle cx="4.2" cy="4.2" r="2.7" fill="none" stroke="#8a8a8a" stroke-width="1.1"/><path d="M6.2 6.3L8.6 8.8" stroke="#8a8a8a" stroke-width="1.3" stroke-linecap="round"/></svg>
<svg style="position:absolute;left:516.3px;top:696px;" width="10" height="10" viewBox="0 0 10 10"><circle cx="4.2" cy="4.2" r="2.7" fill="none" stroke="#8a8a8a" stroke-width="1.1"/><path d="M6.2 6.3L8.6 8.8" stroke="#8a8a8a" stroke-width="1.3" stroke-linecap="round"/></svg>
<svg style="position:absolute;left:661.4px;top:696px;" width="10" height="10" viewBox="0 0 10 10"><circle cx="4.2" cy="4.2" r="2.7" fill="none" stroke="#8a8a8a" stroke-width="1.1"/><path d="M6.2 6.3L8.6 8.8" stroke="#8a8a8a" stroke-width="1.3" stroke-linecap="round"/></svg>
<svg style="position:absolute;left:740px;top:696px;" width="10" height="10" viewBox="0 0 10 10"><circle cx="4.2" cy="4.2" r="2.7" fill="none" stroke="#8a8a8a" stroke-width="1.1"/><path d="M6.2 6.3L8.6 8.8" stroke="#8a8a8a" stroke-width="1.3" stroke-linecap="round"/></svg>
<svg style="position:absolute;left:919.5px;top:696px;" width="10" height="10" viewBox="0 0 10 10"><circle cx="4.2" cy="4.2" r="2.7" fill="none" stroke="#8a8a8a" stroke-width="1.1"/><path d="M6.2 6.3L8.6 8.8" stroke="#8a8a8a" stroke-width="1.3" stroke-linecap="round"/></svg>
<svg style="position:absolute;left:1068.3px;top:696px;" width="10" height="10" viewBox="0 0 10 10"><circle cx="4.2" cy="4.2" r="2.7" fill="none" stroke="#8a8a8a" stroke-width="1.1"/><path d="M6.2 6.3L8.6 8.8" stroke="#8a8a8a" stroke-width="1.3" stroke-linecap="round"/></svg>
<svg style="position:absolute;left:1128.2px;top:696px;" width="10" height="10" viewBox="0 0 10 10"><circle cx="4.2" cy="4.2" r="2.7" fill="none" stroke="#8a8a8a" stroke-width="1.1"/><path d="M6.2 6.3L8.6 8.8" stroke="#8a8a8a" stroke-width="1.3" stroke-linecap="round"/></svg>
<svg style="position:absolute;left:1308.3px;top:696px;" width="10" height="10" viewBox="0 0 10 10"><circle cx="4.2" cy="4.2" r="2.7" fill="none" stroke="#8a8a8a" stroke-width="1.1"/><path d="M6.2 6.3L8.6 8.8" stroke="#8a8a8a" stroke-width="1.3" stroke-linecap="round"/></svg>
<svg style="position:absolute;left:426px;top:709.6px;" width="10" height="5" viewBox="0 0 10 5"><path d="M1.5 4.2L4.7 0.8L7.9 4.2Z" fill="#595959"/></svg>
<span class="t" style='top:718.00px;font-family:"Liberation Mono", monospace;font-size:8.6px;font-weight:400;color:#666;right:1202.8px;transform-origin:100% 0;transform:scaleX(0.9304);'>976267</span>
<span class="t" style='top:717.00px;font-family:"Liberation Sans", sans-serif;font-size:8.3px;font-weight:400;color:#3f7fa6;left:406.3px;transform-origin:0 0;transform:scaleX(0.9474);'>Acesso Livre</span>
<span class="t" style='top:717.00px;font-family:"Liberation Sans", sans-serif;font-size:8.3px;font-weight:400;color:#666;left:474.8px;transform-origin:0 0;transform:scaleX(0.9171);'>RJ</span>
<span class="t" style='top:717.00px;font-family:"Liberation Sans", sans-serif;font-size:8.3px;font-weight:400;color:#666;left:535.6px;transform-origin:0 0;transform:scaleX(0.9273);'>RIO DE JANEIRO</span>
<span class="t" style='top:718.00px;font-family:"Liberation Mono", monospace;font-size:8.6px;font-weight:400;color:#666;left:682px;transform-origin:0 0;transform:scaleX(0.9459);'>13316018000149</span>
<span class="t" style='top:717.00px;font-family:"Liberation Sans", sans-serif;font-size:8.3px;font-weight:400;color:#666;left:759.3px;transform-origin:0 0;transform:scaleX(0.9368);'>INSTITUTO NACIONAL SOCIAL DO BRASIL</span>
<span class="t" style='top:717.00px;font-family:"Liberation Sans", sans-serif;font-size:8.3px;font-weight:400;color:#666;left:939px;transform-origin:0 0;transform:scaleX(0.9069);'>TERMO DE FOMENTO</span>
<span class="t" style='top:717.00px;font-family:"Liberation Sans", sans-serif;font-size:8.3px;font-weight:400;color:#666;left:1087.5px;transform-origin:0 0;transform:scaleX(0.9481);'>SIM</span>
<span class="t" style='top:717.00px;font-family:"Liberation Sans", sans-serif;font-size:8.3px;font-weight:400;color:#666;left:1148px;transform-origin:0 0;transform:scaleX(0.9634);'>Implementação e Desenvolvimento do Projeto</span>
<span class="t" style='top:727.00px;font-family:"Liberation Sans", sans-serif;font-size:8.3px;font-weight:400;color:#666;left:1148px;transform-origin:0 0;transform:scaleX(0.9527);'>Brasil + Esporte - Núcleo Complexodo Alemão</span>
<span class="t" style='top:738.00px;font-family:"Liberation Sans", sans-serif;font-size:8.3px;font-weight:400;color:#666;left:1148px;transform-origin:0 0;transform:scaleX(0.9328);'>no Estado do Rio de Janeiro - RJ</span>
<span class="t" style='top:717.00px;font-family:"Liberation Sans", sans-serif;font-size:8.3px;font-weight:400;color:#666;left:1328px;transform-origin:0 0;transform:scaleX(0.9149);'>Em execução</span>
<span class="t" style='top:753.00px;font-family:"Liberation Mono", monospace;font-size:8.6px;font-weight:400;color:#666;right:1202.8px;transform-origin:100% 0;transform:scaleX(0.9304);'>982593</span>
<span class="t" style='top:752.00px;font-family:"Liberation Sans", sans-serif;font-size:8.3px;font-weight:400;color:#3f7fa6;left:406.3px;transform-origin:0 0;transform:scaleX(0.9474);'>Acesso Livre</span>
<span class="t" style='top:752.00px;font-family:"Liberation Sans", sans-serif;font-size:8.3px;font-weight:400;color:#666;left:474.8px;transform-origin:0 0;transform:scaleX(0.9171);'>RJ</span>
<span class="t" style='top:752.00px;font-family:"Liberation Sans", sans-serif;font-size:8.3px;font-weight:400;color:#666;left:535.6px;transform-origin:0 0;transform:scaleX(0.9273);'>RIO DE JANEIRO</span>
<span class="t" style='top:753.00px;font-family:"Liberation Mono", monospace;font-size:8.6px;font-weight:400;color:#666;left:682px;transform-origin:0 0;transform:scaleX(0.9459);'>13316018000149</span>
<span class="t" style='top:752.00px;font-family:"Liberation Sans", sans-serif;font-size:8.3px;font-weight:400;color:#666;left:759.3px;transform-origin:0 0;transform:scaleX(0.9368);'>INSTITUTO NACIONAL SOCIAL DO BRASIL</span>
<span class="t" style='top:752.00px;font-family:"Liberation Sans", sans-serif;font-size:8.3px;font-weight:400;color:#666;left:939px;transform-origin:0 0;transform:scaleX(0.9069);'>TERMO DE FOMENTO</span>
<span class="t" style='top:752.00px;font-family:"Liberation Sans", sans-serif;font-size:8.3px;font-weight:400;color:#666;left:1087.5px;transform-origin:0 0;transform:scaleX(0.9481);'>SIM</span>
<span class="t" style='top:752.00px;font-family:"Liberation Sans", sans-serif;font-size:8.3px;font-weight:400;color:#666;left:1148px;transform-origin:0 0;transform:scaleX(0.9634);'>Implementação e Desenvolvimento do Projeto</span>
<span class="t" style='top:762.00px;font-family:"Liberation Sans", sans-serif;font-size:8.3px;font-weight:400;color:#666;left:1148px;transform-origin:0 0;transform:scaleX(0.9436);'>Brasil + Esporte - Núcleo Guaratiba no Estado</span>
<span class="t" style='top:772.00px;font-family:"Liberation Sans", sans-serif;font-size:8.3px;font-weight:400;color:#666;left:1148px;transform-origin:0 0;transform:scaleX(0.9424);'>do Rio de Janeiro</span>
<span class="t" style='top:752.00px;font-family:"Liberation Sans", sans-serif;font-size:8.3px;font-weight:400;color:#666;left:1328px;transform-origin:0 0;transform:scaleX(0.9149);'>Em execução</span>
<span class="t" style='top:789.00px;font-family:"Liberation Serif", serif;font-size:9px;font-weight:700;color:#404040;left:318px;transform-origin:0 0;transform:scaleX(0.9488);'>Totais</span>
<div style="position:absolute;left:0px;top:836.2px;width:1600px;height:33.8px;background:linear-gradient(90deg,#1f2125 0px,#1d1f24 540px,#1d2027 640px,#232c38 760px,#2a3543 880px,#27313e 1000px,#222c38 1200px,#1e2833 1400px,#1c2530 1600px);"></div>
<svg style="position:absolute;left:0px;top:845px;" width="13" height="16" viewBox="0 0 13 16"><g fill="#fff"><rect x="-2" y="1.6" width="6" height="6"/><rect x="5" y="1.6" width="6.3" height="6"/><rect x="-2" y="8.6" width="6" height="6.2"/><rect x="5" y="8.6" width="6.3" height="6.2"/></g></svg>
<div style="position:absolute;left:24.5px;top:836.2px;width:242.5px;height:33.8px;background:#f0f0f0;box-sizing:border-box;border-top:1px solid #c9c9c9;"></div>
<svg style="position:absolute;left:32px;top:843px;" width="20" height="20" viewBox="0 0 20 20"><circle cx="11" cy="8.3" r="4.3" fill="none" stroke="#333" stroke-width="1.3"/><path d="M8 11.6L3 16.4" stroke="#333" stroke-width="1.4" stroke-linecap="round"/></svg>
<span class="t" style='top:848.00px;font-family:"Liberation Sans", sans-serif;font-size:12.6px;font-weight:400;color:#444;left:58.6px;transform-origin:0 0;transform:scaleX(0.9069);'>Pesquisar</span>
<svg style="position:absolute;left:195px;top:834px;" width="80" height="36" viewBox="0 0 80 36"><defs><linearGradient id="bb" x1="0" y1="0" x2="0.3" y2="1"><stop offset="0" stop-color="#f0a830"/><stop offset="0.45" stop-color="#f6cf5a"/><stop offset="1" stop-color="#ece6d4"/></linearGradient></defs>
<path d="M14.5 15.5L23 8.2C27 6.8 32 7 36 8.4L37.2 17.6C33 18.4 28 18 24.5 17L19 20.5Z" fill="#a6dca2"/>
<path d="M16.5 13.5L22 9" stroke="#4f8a55" stroke-width="1.6" stroke-dasharray="1.6 1.6"/>
<ellipse cx="36" cy="13" rx="2.7" ry="4" fill="#2f5b3b"/>
<path d="M9 18.6H26V26.6H9Z" fill="#b4e6b0"/>
<ellipse cx="9" cy="22.6" rx="2" ry="4" fill="#6aa96a"/>
<ellipse cx="25.6" cy="22.6" rx="2.7" ry="3.8" fill="#2f5b3b"/>
<circle cx="27" cy="15.6" r="1.6" fill="#3d7045"/>
<path d="M31.5 21.6C38 24 45 27.4 52 29.4C58 31 66 31.4 72 30V33.4C64 34.6 56 33.4 50 31.4C44 29.4 37 25.4 31.5 21.6Z" fill="#8c4a28"/>
<path d="M37.4 22.6L39.6 19.4L41 21.4L44.6 21.4L43 23.2L38 23.8Z" fill="#68bd66"/>
<path d="M50.5 4.6C47 9 45.8 16 47.4 22C49 27.4 53 29.4 57.4 28.4L58.6 14C57 10 54.4 6.8 50.5 4.6Z" fill="url(#bb)"/>
<path d="M50.3 4.4C54 3.2 58.6 6 59.8 12.8C57 11.4 54 9.4 52 6.6Z" fill="#5a9fd0"/>
<path d="M50.6 4.6L49.4 3.2L50 6.2Z" fill="#777"/>
<circle cx="54.6" cy="8" r="0.9" fill="#173a5c"/>
<path d="M56.6 13C61 16 64.2 24 65.2 30.4L62.6 30.2L63 36H59.8L59 30C57.2 26 56 20 56.6 13Z" fill="#4c98d4"/></svg>
<svg style="position:absolute;left:278px;top:844px;" width="18" height="17" viewBox="0 0 18 17"><g fill="none" stroke="#fff" stroke-width="1.2"><rect x="3.4" y="5" width="8.2" height="7.4"/><path d="M2 2.6H12.8M2 14.8H12.8"/><path d="M14.6 2.2V4.6M14.6 6.4V11.4M14.6 13V15.2" stroke-width="1.5"/></g></svg>
<svg style="position:absolute;left:318.5px;top:842.5px;" width="23" height="22" viewBox="0 0 23 22"><defs><linearGradient id="eg1" x1="0" y1="0" x2="1" y2="1"><stop offset="0" stop-color="#35c1f1"/><stop offset="1" stop-color="#0c59a4"/></linearGradient><linearGradient id="eg2" x1="0" y1="0" x2="1" y2="0"><stop offset="0" stop-color="#2f9fd8"/><stop offset="1" stop-color="#5fd468"/></linearGradient></defs><circle cx="11.4" cy="11" r="10.2" fill="url(#eg1)"/><path d="M1.4 9.5C2.5 4 7 0.8 11.8 0.8C17.5 0.8 21.6 5 21.6 9.6C21.6 12.6 19.6 14.6 17 14.6C15 14.6 13.6 13.6 13.6 12.4C13.6 11.6 14.4 11 14.4 9.8C14.4 8 12.6 6.6 10.4 6.6C6.4 6.6 3 9.5 1.4 9.5Z" fill="url(#eg2)"/><path d="M7.6 12.5C7.6 16.6 10.8 19.6 14.6 19.6C16.6 19.6 18.4 19 19.4 18C17.6 20.2 14.8 21.3 11.6 21.2C7 21 4.2 17.6 4.2 13.6C4.2 11 5.8 8.8 8.6 7.6C7.9 8.9 7.6 10.6 7.6 12.5Z" fill="#1766b8"/></svg>
<svg style="position:absolute;left:361px;top:844.5px;" width="21" height="17" viewBox="0 0 21 17"><path d="M0.8 1.4H7L8.6 3.2H19.6V15.6H0.8Z" fill="#e9b535"/><path d="M0.8 4.8H19.6V15.8H0.8Z" fill="#f7d264"/><path d="M5 10.2H15.4V15.8H5Z" fill="#4d8fd0"/><path d="M7.6 12.6H12.8V15.8H7.6Z" fill="#f7d264"/></svg>
<svg style="position:absolute;left:401.5px;top:843px;" width="21" height="21" viewBox="0 0 21 21"><path d="M6.8 5.2V3.2A1.6 1.6 0 0 1 8.4 1.6H12.6A1.6 1.6 0 0 1 14.2 3.2V5.2" fill="none" stroke="#4bb3d9" stroke-width="1.5"/><path d="M1 5H20V18A2 2 0 0 1 18 20H3A2 2 0 0 1 1 18Z" fill="#f2f2f2"/><rect x="6.6" y="8.4" width="3.4" height="3.4" fill="#e8523f"/><rect x="10.9" y="8.4" width="3.4" height="3.4" fill="#7fba3c"/><rect x="6.6" y="12.7" width="3.4" height="3.4" fill="#3fa4e8"/><rect x="10.9" y="12.7" width="3.4" height="3.4" fill="#f5b92a"/></svg>
<svg style="position:absolute;left:442.5px;top:843px;" width="22" height="21" viewBox="0 0 22 21"><path d="M5 8.6L13 1.6L21 8.6V17A2 2 0 0 1 19 19H7A2 2 0 0 1 5 17Z" fill="#2a7fd6"/><path d="M7.4 7.8L13 3L18.6 7.8V12H7.4Z" fill="#7fc4f5"/><path d="M5 9L13 14.6L21 9V17A2 2 0 0 1 19 19H7A2 2 0 0 1 5 17Z" fill="#1e62c0"/><path d="M13 14.6L21 9V17A2 2 0 0 1 19 19H11Z" fill="#3f9af0"/><rect x="0.8" y="9" width="9.4" height="9.4" rx="1.6" fill="#1457b8"/><circle cx="5.5" cy="13.7" r="2.3" fill="none" stroke="#fff" stroke-width="1.4"/></svg>
<div style="position:absolute;left:475px;top:836.2px;width:39.6px;height:33.8px;background:#43474d;"></div>
<div style="position:absolute;left:475px;top:868px;width:39.6px;height:2px;background:#9cc4ea;"></div>
<svg style="position:absolute;left:484.5px;top:842.8px;" width="21" height="21" viewBox="0 0 21 21"><circle cx="10.5" cy="10.5" r="10" fill="#e94235"/><path d="M10.5 10.5L1.85 5.5A10 10 0 0 0 5.5 19.16Z" fill="#2da94f"/><path d="M10.5 10.5L1.85 5.5A10 10 0 0 0 5.5 19.16L10.5 10.5Z" fill="#2da94f"/><path d="M10.5 10.5H20.5A10 10 0 0 1 5.5 19.16Z" fill="#fcc934"/><path d="M1.85 5.5L5.5 19.16L10.5 10.5Z" fill="#2da94f"/><circle cx="10.5" cy="10.5" r="4.7" fill="#fff"/><circle cx="10.5" cy="10.5" r="3.7" fill="#4285f4"/></svg>
<svg style="position:absolute;left:1269px;top:841.5px;" width="24" height="23" viewBox="0 0 24 23"><path d="M2 11.5C3 6 7.4 3.2 11.4 3.2C15.6 3.2 19.6 6 20.4 11.5C18.8 10.2 17 10.2 15.6 11.5C14.2 10.2 12.4 10.2 11.2 11.5C9.8 10.2 8 10.2 6.6 11.5C5.2 10.2 3.4 10.2 2 11.5Z" fill="#6cb4e8"/><path d="M11.2 11.2V18.6A1.9 1.9 0 0 1 7.4 18.6" fill="none" stroke="#8a6a5a" stroke-width="1.3"/><g fill="#5fa8e0"><circle cx="14.6" cy="1.4" r="0.9"/><circle cx="18.4" cy="2.4" r="0.9"/><circle cx="21" cy="5" r="0.9"/><circle cx="20.6" cy="8.2" r="0.8"/></g></svg>
<span class="t" style='top:847.00px;font-family:"Liberation Sans", sans-serif;font-size:12.4px;font-weight:400;color:#fff;left:1297px;transform-origin:0 0;transform:scaleX(0.9211);'>Chuva à tarde</span>
<svg style="position:absolute;left:1389px;top:848px;" width="14" height="10" viewBox="0 0 14 10"><path d="M1.6 7.8L6.8 2.6L12 7.8" fill="none" stroke="#fff" stroke-width="1.3"/></svg>
<svg style="position:absolute;left:1408px;top:845.5px;" width="17" height="17" viewBox="0 0 17 17"><path d="M1.4 2.6L13.8 1V12.4L1.4 11Z" fill="none" stroke="#fff" stroke-width="1.1"/><path d="M5 4.6H9M5 6.8H8M5 9H9" stroke="#fff" stroke-width="0.9"/><circle cx="11.4" cy="12.4" r="2.9" fill="#2f7fd8"/></svg>
<svg style="position:absolute;left:1427.5px;top:845.5px;" width="17" height="17" viewBox="0 0 17 17"><g fill="none" stroke="#fff" stroke-width="1.1"><rect x="3.6" y="2.4" width="11" height="8"/><path d="M9 10.4V13.4M6 13.6H12"/><rect x="1.2" y="1" width="2.6" height="3.4" fill="#1b2837"/></g></svg>
<svg style="position:absolute;left:1447.5px;top:845.5px;" width="18" height="17" viewBox="0 0 18 17"><g fill="none" stroke="#fff" stroke-width="1.1" stroke-linejoin="round"><path d="M1.6 6.2H4L7.4 3V14L4 10.8H1.6Z"/><path d="M9.4 6.6A2.6 2.6 0 0 1 9.4 10.4"/><path d="M11.4 4.6A5.2 5.2 0 0 1 11.4 12.4"/><path d="M13.4 2.8A7.8 7.8 0 0 1 13.4 14.2"/></g></svg>
<span class="t" style='top:841.00px;font-family:"Liberation Sans", sans-serif;font-size:10.8px;font-weight:400;color:#fff;left:1471.3px;transform-origin:0 0;transform:scaleX(0.8203);'>POR</span>
<span class="t" style='top:855.00px;font-family:"Liberation Sans", sans-serif;font-size:10.8px;font-weight:400;color:#fff;left:1470.6px;transform-origin:0 0;transform:scaleX(0.7921);'>PTB2</span>
<span class="t" style='top:841.00px;font-family:"Liberation Sans", sans-serif;font-size:10.8px;font-weight:400;color:#fff;left:1514px;transform-origin:0 0;transform:scaleX(0.8509);'>09:25</span>
<span class="t" style='top:855.00px;font-family:"Liberation Sans", sans-serif;font-size:10.8px;font-weight:400;color:#fff;left:1501.5px;transform-origin:0 0;transform:scaleX(0.9066);'>20/02/2026</span>
<svg style="position:absolute;left:1563px;top:843px;" width="24" height="22" viewBox="0 0 24 22"><path d="M3.4 2.4H16.6V13H8.6L5.4 16V13H3.4Z" fill="#fff"/><path d="M5.6 5.4H14.4M5.6 7.8H14.4M5.6 10.2H11" stroke="#1b2837" stroke-width="0.9"/><circle cx="15" cy="14.6" r="4.6" fill="#1b2837" stroke="#cfd6dc" stroke-width="1"/></svg>
<span class="t" style='top:854.00px;font-family:"Liberation Sans", sans-serif;font-size:7.6px;font-weight:700;color:#fff;left:1578px;transform-origin:0 0;margin-left:-500px;width:1000px;text-align:center;transform-origin:50% 0;transform:scaleX(1.0863);'>2</span>
<div style="position:absolute;left:1595.5px;top:836.2px;width:1px;height:33.8px;background:#5a6672;"></div>
</body></html>
